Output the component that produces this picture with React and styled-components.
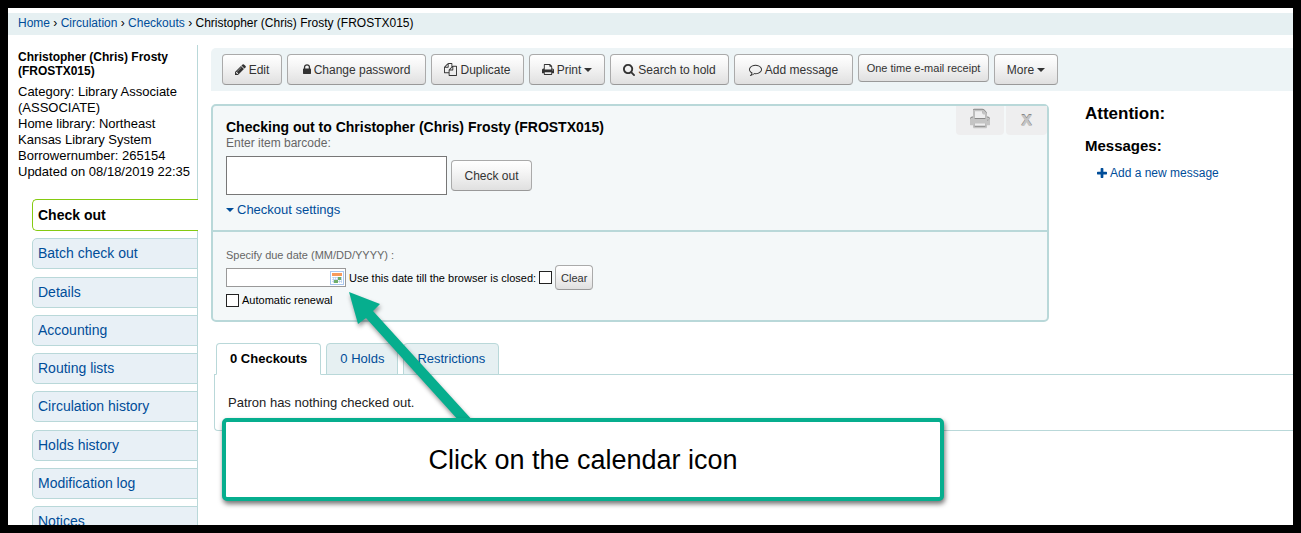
import React from "react";
import styled, { createGlobalStyle, css } from "styled-components";

const teal = "#b9d8d9";
const link = "#004d99";
const green = "#06ae8e";

const GlobalStyle = createGlobalStyle`
  *, *::before, *::after { box-sizing: border-box; }
  body {
    margin: 0;
    background: #fff;
    color: #000;
    font: 13px/16px "Liberation Sans", Arial, sans-serif;
  }
  button, input { font-family: inherit; }
  a { color: ${link}; text-decoration: none; }
`;

const Frame = styled.div`
  position: relative;
  display: flex;
  flex-direction: column;
  height: 100vh;
  overflow: hidden;
  border: 8px solid #000;
`;

const Breadcrumbs = styled.nav`
  flex: none;
  margin-top: 5px;
  padding: 2px 10px 4px;
  background: #e6f0f2;
  font-size: 12px;
`;

const Columns = styled.div`
  display: flex;
  flex: 1;
  min-height: 0;
  margin-top: 10px;
`;

const Sidebar = styled.aside`
  flex: none;
  width: 190px;
  border-right: 1px solid ${teal};
`;

const Patron = styled.section`
  padding: 5px 0 0 10px;
`;

const PatronName = styled.h5`
  margin: 0 0 6px;
  font-size: 12px;
  line-height: 14px;
`;

const PatronFacts = styled.ul`
  margin: 0;
  padding: 0;
  list-style: none;
`;

const Menu = styled.ul`
  display: flex;
  flex-direction: column;
  justify-content: space-between;
  height: 338px;
  margin: 19px -1px 0 24px;
  padding: 0;
  list-style: none;
`;

const MenuLink = styled.a`
  display: block;
  height: 31px;
  padding: 6px 5px;
  border: 1px solid ${teal};
  border-radius: 5px 0 0 5px;
  background: #e8f0f6;
  font-size: 14px;
  ${(p) =>
    p.$active &&
    css`
      height: 32px;
      padding-top: 7px;
      border-color: #85ca11;
      border-right: 0;
      background: #fff;
      color: #000;
      font-weight: bold;
    `}
`;

const Main = styled.main`
  flex: 1;
  min-width: 0;
  margin: 3px 0 0 13px;
`;

const Toolbar = styled.div`
  display: flex;
  align-items: flex-start;
  gap: 5px;
  padding: 6px 11px;
  border-radius: 5px 0 0 0;
  background: #edf4f6;
`;

const Button = styled.button`
  display: inline-flex;
  align-items: center;
  justify-content: center;
  gap: 3px;
  min-width: ${(p) => p.$width || 0}px;
  height: ${(p) => (p.$size === "tiny" ? 25 : p.$size === "small" ? 28 : 31)}px;
  padding: 0 ${(p) => (p.$size === "tiny" ? 5 : p.$size === "small" ? 7 : 10)}px;
  border: 1px solid #aaa;
  border-bottom-color: #999;
  border-radius: 4px;
  background: linear-gradient(#fff, #f6f6f6 35%, #e0e0e0);
  color: #333;
  font-size: ${(p) => (p.$size ? 11 : 12)}px;
  line-height: 16px;
  white-space: nowrap;
`;

const Caret = styled.span`
  border: 4px solid transparent;
  border-top-color: currentColor;
  border-bottom: 0;
`;

const Upper = styled.div`
  display: flex;
  align-items: flex-start;
  margin-top: 13px;
`;

const Panel = styled.section`
  position: relative;
  flex: 1;
  border: 2px solid ${teal};
  border-radius: 5px;
  background: #f4f8f9;
`;

const PanelPart = styled.form`
  padding: ${(p) => (p.$settings ? "15px 13px 12px" : "13px 13px 12px")};
  border-top: ${(p) => (p.$settings ? `2px solid ${teal}` : "0")};
  font-size: ${(p) => (p.$settings ? 11 : 12)}px;
`;

const PanelTitle = styled.label`
  display: block;
  font-size: 14px;
  font-weight: bold;
`;

const Hint = styled.div`
  color: #666;
`;

const Row = styled.div`
  display: flex;
  align-items: center;
  gap: ${(p) => p.$gap || 3}px;
  margin-top: ${(p) => p.$top || 0}px;
`;

const Barcode = styled.input`
  width: 221px;
  height: 39px;
  border: 1px solid #777;
  background: #fff;
`;

const SettingsLink = styled.a`
  display: inline-flex;
  align-items: center;
  gap: 3px;
  margin-top: 7px;
  font-size: 13px;
`;

const DateField = styled.div`
  display: flex;
  align-items: center;
  width: 120px;
  height: 19px;
  border: 1px solid #999;
  background: #fff;

  input {
    flex: 1;
    min-width: 0;
    height: 100%;
    border: 0;
    background: none;
  }
  button {
    display: flex;
    padding: 0;
    border: 0;
    background: none;
  }
`;

const Check = styled.input.attrs({ type: "checkbox" })`
  appearance: none;
  width: 13px;
  height: 13px;
  margin: 0;
  border: 1px solid #222;
  background: #fff;
`;

const Corner = styled.div`
  position: absolute;
  top: 0;
  right: 0;
  display: flex;
  gap: 2px;
`;

const CornerButton = styled.button`
  display: flex;
  align-items: center;
  justify-content: center;
  width: ${(p) => p.$width}px;
  height: 29px;
  padding: 0 0 4px;
  border: 0;
  border-radius: 0 0 4px 4px;
  background: #eeeeef;
  color: #c4c4c4;
  font: bold 20px/20px "Liberation Sans", Arial, sans-serif;
  text-shadow: 0 -1px 0 #888;

  svg { filter: drop-shadow(0 -1px 0 #888); }
`;

const Messages = styled.aside`
  flex: none;
  width: 244px;
  padding-left: 36px;

  h3, h4 { margin: 0; line-height: 20px; }
  h3 { font-size: 17px; }
  h4 { margin-top: 12px; font-size: 15px; }
  a {
    display: flex;
    align-items: center;
    gap: 3px;
    margin: 9px 0 0 12px;
    font-size: 12px;
  }
`;

const Tabs = styled.div`
  display: flex;
  gap: 5px;
  margin: 21px 0 -1px 5px;
`;

const Tab = styled.a`
  height: 32px;
  padding: 7px 13px;
  border: 1px solid ${teal};
  border-radius: 4px 4px 0 0;
  background: #e6f0f2;
  font-size: 13px;
  ${(p) =>
    p.$active &&
    css`
      border-bottom-color: #fff;
      background: #fff;
      color: #000;
      font-weight: bold;
    `}
`;

const TabPanel = styled.section`
  margin-left: 3px;
  padding: 20px 13px 19px;
  border: 1px solid ${teal};
  border-right: 0;
  border-radius: 0 0 0 4px;
  color: #222;

  p { margin: 0; }
`;

const Callout = styled.div`
  position: absolute;
  top: 410px;
  left: 214px;
  display: flex;
  align-items: center;
  justify-content: center;
  width: 722px;
  height: 83px;
  border: 4px solid ${green};
  border-radius: 5px;
  background: #fff;
  box-shadow: 1px 3px 5px rgba(0, 0, 0, 0.55);
  font-size: 27px;
  line-height: 32px;
`;

const Arrow = styled.svg`
  position: absolute;
  top: 272px;
  left: 332px;
  filter: drop-shadow(1px 3px 2px rgba(0, 0, 0, 0.4));
  pointer-events: none;
`;

const icons = {
  edit: "M491 1536l91-91-235-235-91 91v107h128v128h107zm523-928q0-22-22-22-10 0-17 7l-542 542q-7 7-7 17 0 22 22 22 10 0 17-7l542-542q7-7 7-17zm-54-192l416 416-832 832h-416v-416zm683 96q0 53-37 90l-166 166-416-416 166-165q36-38 90-38 53 0 91 38l235 234q37 39 37 91z",
  lock: "M640 768h512v-192q0-106-75-181t-181-75-181 75-75 181v192zm832 96v576q0 40-28 68t-68 28h-960q-40 0-68-28t-28-68v-576q0-40 28-68t68-28h32v-192q0-184 132-316t316-132 316 132 132 316v192h32q40 0 68 28t28 68z",
  copy: "M1696 384q40 0 68 28t28 68v1216q0 40-28 68t-68 28h-960q-40 0-68-28t-28-68v-288h-544q-40 0-68-28t-28-68v-672q0-40 20-88t48-76l408-408q28-28 76-48t88-20h416q40 0 68 28t28 68v328q68-40 128-40h416zm-544 213l-299 299h299v-299zm-640-384l-299 299h299v-299zm196 647l316-316v-416h-384v416q0 40-28 68t-68 28h-416v640h512v-256q0-40 20-88t48-76zm956 804v-1152h-384v416q0 40-28 68t-68 28h-416v640h896z",
  print:
    "M448 1536h896v-256h-896v256zm0-640h896v-384h-160q-40 0-68-28t-28-68v-160h-640v640zm1152 64q0-26-19-45t-45-19-45 19-19 45 19 45 45 19 45-19 19-45zm128 0v416q0 13-9.5 22.5t-22.5 9.5h-224v160q0 40-28 68t-68 28h-960q-40 0-68-28t-28-68v-160h-224q-13 0-22.5-9.5t-9.5-22.5v-416q0-79 56.5-135.5t135.5-56.5h64v-544q0-40 28-68t68-28h672q40 0 88 20t76 48l152 152q28 28 48 76t20 88v256h64q79 0 135.5 56.5t56.5 135.5z",
  search:
    "M1216 832q0-185-131.5-316.5t-316.5-131.5-316.5 131.5-131.5 316.5 131.5 316.5 316.5 131.5 316.5-131.5 131.5-316.5zm512 832q0 52-38 90t-90 38q-54 0-90-38l-343-342q-179 124-399 124-143 0-273.5-55.5t-225-150-150-225-55.5-273.5 55.5-273.5 150-225 225-150 273.5-55.5 273.5 55.5 225 150 150 225 55.5 273.5q0 220-124 399l343 343q37 37 37 90z",
  comment:
    "M896 384q-204 0-381.5 69.5t-282 187.5-104.5 255q0 112 71.5 213.5t201.5 175.5l87 50-27 96q-24 91-70 172 152-63 275-171l43-38 57 6q69 8 130 8 204 0 381.5-69.5t282-187.5 104.5-255-104.5-255-282-187.5-381.5-69.5zm896 512q0 174-120 321.5t-326 233-450 85.5q-70 0-145-8-198 175-460 242-49 14-114 22h-5q-15 0-27-10.5t-16-27.5v-1q-3-4-.5-12t2-10 4.5-9.5l6-9 7-8.5 8-9q7-8 31-34.5t34.5-38 31-39.5 32.5-51 27-59 26-76q-157-89-247.5-220t-90.5-281q0-174 120-321.5t326-233 450-85.5 450 85.5 326 233 120 321.5z",
  plus: "M1600 736v192q0 40-28 68t-68 28h-416v416q0 40-28 68t-68 28h-192q-40 0-68-28t-28-68v-416h-416q-40 0-68-28t-28-68v-192q0-40 28-68t68-28h416v-416q0-40 28-68t68-28h192q40 0 68 28t28 68v416h416q40 0 68 28t28 68z",
};

// viewBox crops that follow each glyph's own advance width
const boxes = {
  edit: [128, 1536],
  lock: [320, 1152],
  copy: [0, 1792],
  print: [64, 1664],
  search: [64, 1664],
  comment: [0, 1792],
  plus: [192, 1408],
};

function Icon({ name, size = 13 }) {
  const [x, w] = boxes[name];
  return (
    <svg
      width={Math.round((w / 1792) * size)}
      height={size}
      viewBox={`${x} 0 ${w} 1792`}
      fill="currentColor"
      aria-hidden="true"
    >
      <path d={icons[name]} />
    </svg>
  );
}

function CalendarIcon() {
  return (
    <svg width="16" height="16" viewBox="0 0 16 16" aria-hidden="true">
      <rect x="1.5" y="1.5" width="13" height="13" fill="#fff" stroke="#a9c8f0" />
      <rect x="3" y="3" width="10" height="3" fill="#f79a5b" />
      <path d="M3 7.5h10M3 9.5h10M3 11.5h10M4.500 7v6M6.500 7v6M8.500 7v6M10.500 7v6M12.500 7v6" stroke="#a9c4e8" strokeWidth=".6" />
      <path d="M9 7h3v3H9zM5 10h4v3H5z" fill="#6fae6a" />
    </svg>
  );
}

const crumbs = ["Home", "Circulation", "Checkouts"];
const tools = [
  { icon: "edit", text: "Edit", width: 60 },
  { icon: "lock", text: "Change password", width: 139 },
  { icon: "copy", text: "Duplicate", width: 93 },
  { icon: "print", text: "Print", caret: true, width: 76 },
  { icon: "search", text: "Search to hold", width: 119 },
  { icon: "comment", text: "Add message", width: 119 },
  { text: "One time e-mail receipt", size: "small", width: 131 },
  { text: "More", caret: true, width: 64 },
];
const menu = [
  "Check out",
  "Batch check out",
  "Details",
  "Accounting",
  "Routing lists",
  "Circulation history",
  "Holds history",
  "Modification log",
  "Notices",
];
const facts = [
  "Category: Library Associate (ASSOCIATE)",
  "Home library: Northeast Kansas Library System",
  "Borrowernumber: 265154",
  "Updated on 08/18/2019 22:35",
];

export default function App() {
  return (
    <>
      <GlobalStyle />
      <Frame>
        <Breadcrumbs>
          {crumbs.map((c) => (
            <React.Fragment key={c}>
              <a href="#">{c}</a> ›{" "}
            </React.Fragment>
          ))}
          Christopher (Chris) Frosty (FROSTX015)
        </Breadcrumbs>
        <Columns>
          <Sidebar>
            <Patron>
              <PatronName>
                Christopher (Chris) Frosty
                <br />
                (FROSTX015)
              </PatronName>
              <PatronFacts>
                {facts.map((f) => (
                  <li key={f}>{f}</li>
                ))}
              </PatronFacts>
            </Patron>
            <Menu>
              {menu.map((m, i) => (
                <li key={m}>
                  <MenuLink href="#" $active={i === 0}>
                    {m}
                  </MenuLink>
                </li>
              ))}
            </Menu>
          </Sidebar>
          <Main>
            <Toolbar>
              {tools.map((t) => (
                <Button key={t.text} type="button" $size={t.size} $width={t.width}>
                  {t.icon && <Icon name={t.icon} />}
                  {t.text}
                  {t.caret && <Caret />}
                </Button>
              ))}
            </Toolbar>
            <Upper>
              <Panel>
                <PanelPart>
                  <PanelTitle htmlFor="barcode">
                    Checking out to Christopher (Chris) Frosty (FROSTX015)
                  </PanelTitle>
                  <Hint>Enter item barcode:</Hint>
                  <Row $top={5} $gap={4}>
                    <Barcode id="barcode" type="text" />
                    <Button type="button" $width={81}>
                      Check out
                    </Button>
                  </Row>
                  <SettingsLink href="#">
                    <Caret />
                    Checkout settings
                  </SettingsLink>
                </PanelPart>
                <PanelPart $settings>
                  <Hint as="label" htmlFor="duedate">
                    Specify due date (MM/DD/YYYY) :
                  </Hint>
                  <Row $top={2}>
                    <DateField>
                      <input id="duedate" type="text" />
                      <button type="button" aria-label="Select date">
                        <CalendarIcon />
                      </button>
                    </DateField>
                    <label htmlFor="sticky">Use this date till the browser is closed:</label>
                    <Check id="sticky" />
                    <Button type="button" $size="tiny">
                      Clear
                    </Button>
                  </Row>
                  <Row $top={2}>
                    <Check id="renewal" />
                    <label htmlFor="renewal">Automatic renewal</label>
                  </Row>
                </PanelPart>
                <Corner>
                  <CornerButton type="button" $width={48} aria-label="Print">
                    <Icon name="print" size={22} />
                  </CornerButton>
                  <CornerButton type="button" $width={41}>
                    x
                  </CornerButton>
                </Corner>
              </Panel>
              <Messages>
                <h3>Attention:</h3>
                <h4>Messages:</h4>
                <a href="#">
                  <Icon name="plus" />
                  Add a new message
                </a>
              </Messages>
            </Upper>
            <Tabs>
              <Tab href="#" $active>
                0 Checkouts
              </Tab>
              <Tab href="#">0 Holds</Tab>
              <Tab href="#">Restrictions</Tab>
            </Tabs>
            <TabPanel>
              <p>Patron has nothing checked out.</p>
            </TabPanel>
          </Main>
        </Columns>
        <Arrow width="140" height="150" viewBox="340 280 140 150" aria-hidden="true">
          <path d="M349 292L380 304L373 311L474 422L460 422L366 318L358 324Z" fill={green} />
        </Arrow>
        <Callout>Click on the calendar icon</Callout>
      </Frame>
    </>
  );
}
